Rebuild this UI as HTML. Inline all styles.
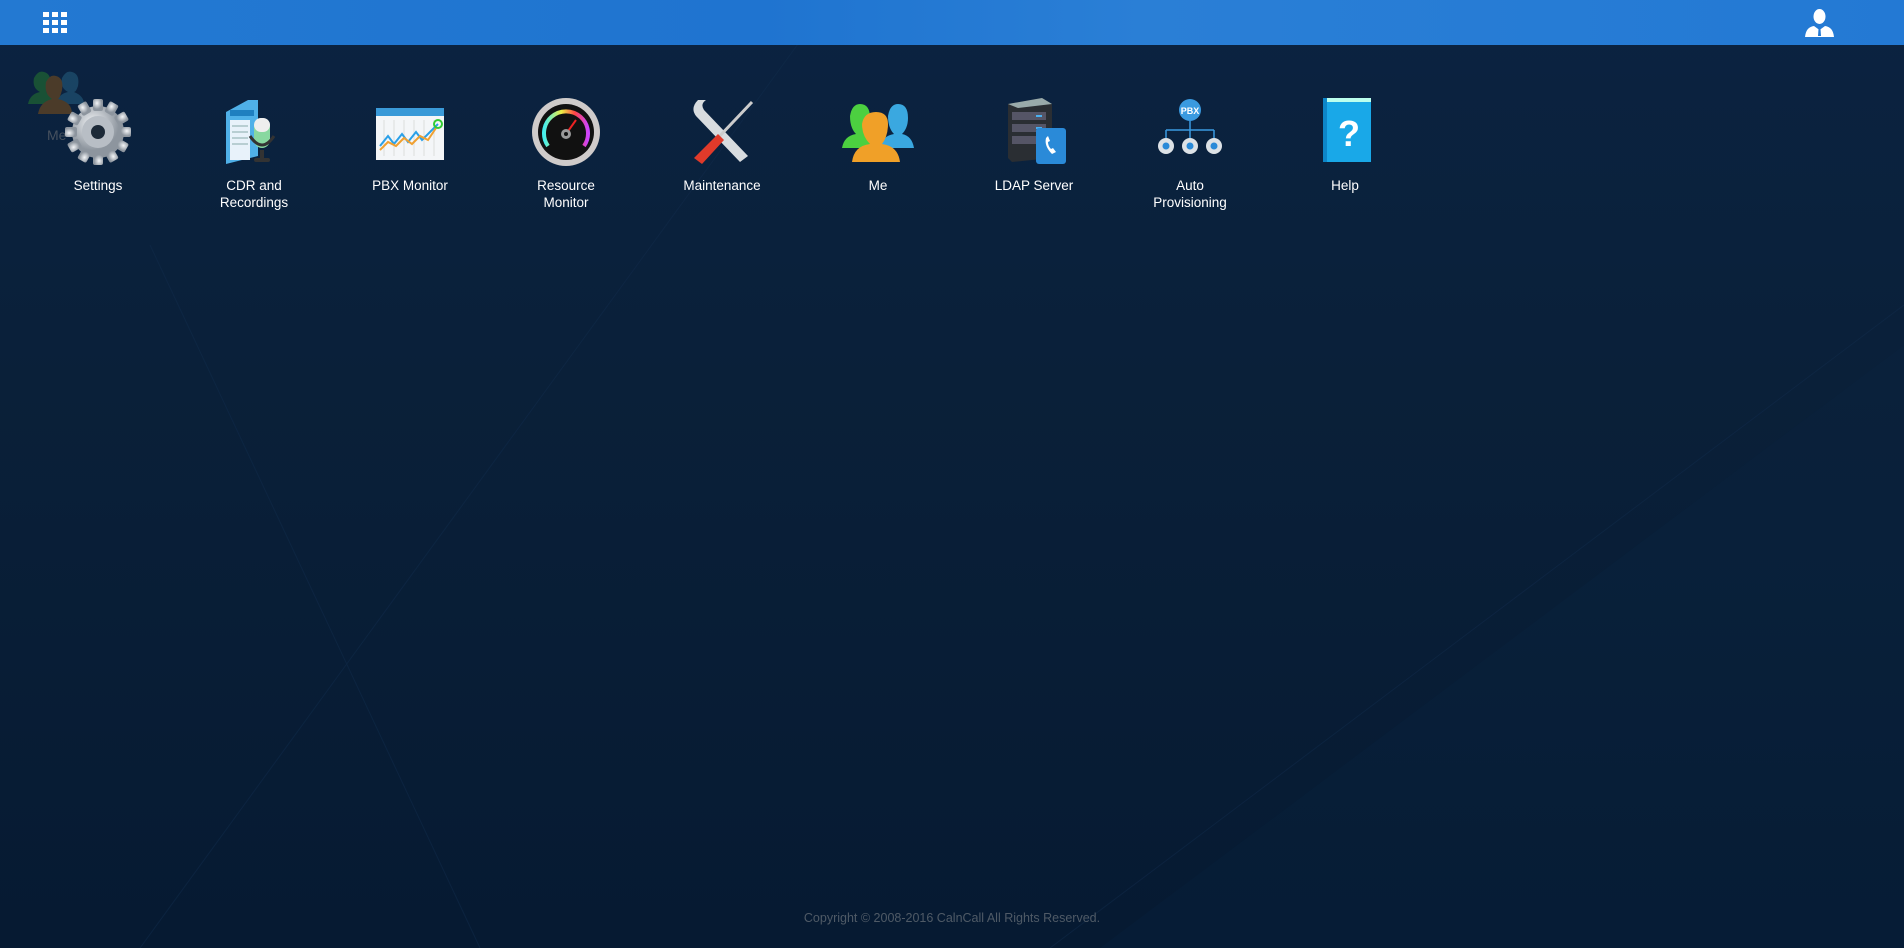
<!DOCTYPE html>
<html><head><meta charset="utf-8"><style>
*{margin:0;padding:0;box-sizing:border-box}
body{width:1904px;height:948px;overflow:hidden;font-family:"Liberation Sans",sans-serif;position:relative;
background:linear-gradient(180deg,#0b2341 0%,#0a2039 40%,#061a32 100%);}
.hdr{position:absolute;left:0;top:0;width:1904px;height:45px;background:linear-gradient(90deg,#2379d2,#1f74d0 40%,#2a7fd6 60%,#2379d4);}
.bg{position:absolute;left:0;top:45px;width:1904px;height:903px}
.it{position:absolute;top:96px;width:140px;text-align:center;color:#fff;font-size:13.5px;line-height:17px}
.it svg{display:block;margin:0 auto 9px;width:72px;height:72px}
.copy{position:absolute;top:911px;left:0;width:1904px;text-align:center;color:#4f5a66;font-size:12.5px}
</style></head><body>
<svg class="bg" viewBox="0 0 1904 903">
<g stroke="#112c4c" stroke-width="1" fill="none" opacity=".5">
<line x1="830" y1="-45" x2="140" y2="903"/>
<line x1="150" y1="200" x2="480" y2="903"/>
<line x1="1904" y1="260" x2="1050" y2="903"/>
</g>
<polygon points="1904,300 1904,903 1100,903" fill="#0c2746" opacity=".2"/>
</svg>
<div class="hdr">
<svg style="position:absolute;left:43px;top:12px" width="24" height="22" viewBox="0 0 24 22" fill="#fff">
<rect x="0" y="0" width="6" height="5"/><rect x="9" y="0" width="6" height="5"/><rect x="18" y="0" width="6" height="5"/>
<rect x="0" y="8" width="6" height="5"/><rect x="9" y="8" width="6" height="5"/><rect x="18" y="8" width="6" height="5"/>
<rect x="0" y="16" width="6" height="5"/><rect x="9" y="16" width="6" height="5"/><rect x="18" y="16" width="6" height="5"/></svg>
<svg style="position:absolute;left:1805px;top:9px" width="29" height="28" viewBox="0 0 29 28" fill="#fff">
<ellipse cx="14.5" cy="7.5" rx="6" ry="7.5"/><path d="M0 28 Q1 18 9 17 L14.5 21 L20 17 Q28 18 29 28Z"/>
<path d="M13.5 20 L15.5 20 L16 27 L13 27Z" fill="#2379d4"/></svg>
</div>
<svg style="position:absolute;left:26px;top:68px;opacity:.45" width="60" height="48" viewBox="0 0 60 48">
<path d="M2 36 Q4 26 14 24 Q6 20 8 10 Q12 2 18 4 Q26 6 24 18 Q22 24 20 24 Q30 28 30 36Z" fill="#2a8a2a"/>
<path d="M30 36 Q32 26 42 24 Q34 20 36 10 Q40 2 46 4 Q54 6 52 18 Q50 24 48 24 Q58 28 58 36Z" fill="#2a6d8f"/>
<path d="M12 46 Q14 34 26 31 Q18 26 20 14 Q24 6 30 8 Q38 10 36 22 Q34 30 32 31 Q46 34 46 46Z" fill="#9a5a10"/></svg>
<div style="position:absolute;left:47px;top:127px;color:#555d66;font-size:14px;opacity:.8">Me</div>

<div class="it" style="left:28px"><svg viewBox="0 0 72 72"><defs><radialGradient id="g1" cx=".4" cy=".35"><stop offset="0" stop-color="#f4f6f8"/><stop offset="1" stop-color="#8d959e"/></radialGradient></defs>
<g fill="url(#g1)"><circle cx="36" cy="36" r="26"/>
<g id="t"><rect x="31" y="3" width="10" height="12" rx="2"/></g>
<use href="#t" transform="rotate(30 36 36)"/><use href="#t" transform="rotate(60 36 36)"/><use href="#t" transform="rotate(90 36 36)"/><use href="#t" transform="rotate(120 36 36)"/><use href="#t" transform="rotate(150 36 36)"/><use href="#t" transform="rotate(180 36 36)"/><use href="#t" transform="rotate(210 36 36)"/><use href="#t" transform="rotate(240 36 36)"/><use href="#t" transform="rotate(270 36 36)"/><use href="#t" transform="rotate(300 36 36)"/><use href="#t" transform="rotate(330 36 36)"/></g>
<circle cx="36" cy="36" r="16" fill="#b8bec5"/><circle cx="36" cy="36" r="7" fill="#1d2a38"/></svg>Settings</div>

<div class="it" style="left:184px"><svg viewBox="0 0 72 72"><path d="M8 16 L30 4 L40 4 L40 60 L8 68Z" fill="#4fb0e8"/><rect x="12" y="14" width="24" height="6" fill="#1f7fc0"/>
<rect x="12" y="24" width="20" height="40" fill="#e8f2fa"/><g stroke="#8aa" stroke-width="1"><line x1="14" y1="30" x2="30" y2="30"/><line x1="14" y1="36" x2="30" y2="36"/><line x1="14" y1="42" x2="30" y2="42"/><line x1="14" y1="48" x2="30" y2="48"/></g>
<rect x="36" y="22" width="16" height="30" rx="8" fill="#88d8a0"/><rect x="36" y="22" width="16" height="14" rx="7" fill="#eee"/><path d="M32 40 Q44 58 56 40" stroke="#333" stroke-width="3" fill="none"/><rect x="42" y="54" width="4" height="8" fill="#333"/><rect x="36" y="62" width="16" height="4" rx="2" fill="#333"/></svg>CDR and<br>Recordings</div>

<div class="it" style="left:340px"><svg viewBox="0 0 72 72"><rect x="2" y="12" width="68" height="52" fill="#f4f6f8"/><rect x="2" y="12" width="68" height="8" fill="#3a9ad8"/>
<g stroke="#ddd"><line x1="10" y1="24" x2="10" y2="60"/><line x1="20" y1="24" x2="20" y2="60"/><line x1="30" y1="24" x2="30" y2="60"/><line x1="40" y1="24" x2="40" y2="60"/><line x1="50" y1="24" x2="50" y2="60"/><line x1="60" y1="24" x2="60" y2="60"/></g>
<polyline points="6,50 14,40 20,48 28,38 34,46 42,36 48,44 58,34 64,28" stroke="#2aa0e8" stroke-width="2" fill="none"/><polyline points="6,54 14,46 22,50 30,42 38,48 46,40 54,44 62,32" stroke="#f0a030" stroke-width="2" fill="none"/><circle cx="64" cy="28" r="4" stroke="#3c3" stroke-width="2" fill="none"/></svg>PBX Monitor</div>

<div class="it" style="left:496px"><svg viewBox="0 0 72 72"><circle cx="36" cy="36" r="34" fill="#cfcbca"/><circle cx="36" cy="36" r="28" fill="#111"/><path d="M18 50 A22 22 0 1 1 54 50" stroke="url(#rb)" stroke-width="4" fill="none"/>
<defs><linearGradient id="rb"><stop offset="0" stop-color="#4ee"/><stop offset=".4" stop-color="#ee4"/><stop offset=".7" stop-color="#f44"/><stop offset="1" stop-color="#c4f"/></linearGradient></defs><line x1="36" y1="38" x2="46" y2="24" stroke="#e22" stroke-width="2"/><circle cx="36" cy="38" r="5" fill="#999"/><circle cx="36" cy="38" r="2" fill="#111"/></svg>Resource<br>Monitor</div>

<div class="it" style="left:652px"><svg viewBox="0 0 72 72"><path d="M12 4 Q4 12 10 20 L54 66 L62 60 L18 14 Q14 8 20 4 Z" fill="#d8dcdf"/><line x1="66" y1="6" x2="30" y2="44" stroke="#ccc" stroke-width="3"/><path d="M32 38 L38 44 L16 68 L8 62Z" fill="#e03a2a"/></svg>Maintenance</div>

<div class="it" style="left:808px"><svg viewBox="0 0 72 72"><path d="M0 52 Q2 40 14 38 Q8 32 8 20 Q10 8 18 8 Q28 8 28 22 Q28 32 22 38 Q32 40 34 52Z" fill="#4cd040"/><path d="M38 52 Q40 40 52 38 Q46 32 46 20 Q48 8 56 8 Q66 8 66 22 Q66 32 60 38 Q70 40 72 52Z" fill="#3aa8e0"/><path d="M10 66 Q12 50 28 48 Q20 40 20 28 Q22 16 34 16 Q46 16 46 28 Q46 40 40 48 Q56 50 58 66Z" fill="#f0a028"/></svg>Me</div>

<div class="it" style="left:964px"><svg viewBox="0 0 72 72"><path d="M10 8 L44 2 L54 8 L54 62 L14 66 L10 62Z" fill="#2a2e33"/><path d="M10 8 L44 2 L54 8 L20 12Z" fill="#9aa"/>
<g fill="#556"><rect x="14" y="16" width="34" height="8"/><rect x="14" y="28" width="34" height="8"/><rect x="14" y="40" width="34" height="8"/></g><g fill="#4ab0f0"><rect x="38" y="19" width="6" height="2"/><rect x="38" y="31" width="6" height="2"/><rect x="38" y="43" width="6" height="2"/></g>
<rect x="38" y="32" width="30" height="36" rx="3" fill="#2a8ad8"/><path d="M48 42 Q46 50 54 58 L58 56 L55 52 L53 53 Q50 50 50 46 L52 45 L50 40Z" fill="#fff"/></svg>LDAP Server</div>

<div class="it" style="left:1120px"><svg viewBox="0 0 72 72"><circle cx="36" cy="14" r="11" fill="#3a9ae0"/><text x="36" y="18" font-size="9" font-weight="bold" fill="#fff" text-anchor="middle" font-family="Liberation Sans">PBX</text>
<path d="M36 25 V42 M12 34 H60 M12 34 V42 M60 34 V42" stroke="#3a9ae0" stroke-width="1.5" fill="none"/>
<g fill="#dde2e6"><circle cx="12" cy="50" r="8"/><circle cx="36" cy="50" r="8"/><circle cx="60" cy="50" r="8"/></g><g fill="#2a8ad8"><circle cx="12" cy="50" r="3.5"/><circle cx="36" cy="50" r="3.5"/><circle cx="60" cy="50" r="3.5"/></g></svg>Auto<br>Provisioning</div>

<div class="it" style="left:1275px"><svg viewBox="0 0 72 72"><rect x="14" y="2" width="48" height="64" fill="#19a8e8"/><rect x="14" y="2" width="48" height="4" fill="#bfe"/><rect x="14" y="2" width="4" height="64" fill="#0d86c8"/><text x="40" y="50" font-size="36" font-weight="bold" fill="#fff" text-anchor="middle" font-family="Liberation Sans">?</text></svg>Help</div>

<div class="copy">Copyright © 2008-2016 CalnCall All Rights Reserved.</div>
</body></html>
